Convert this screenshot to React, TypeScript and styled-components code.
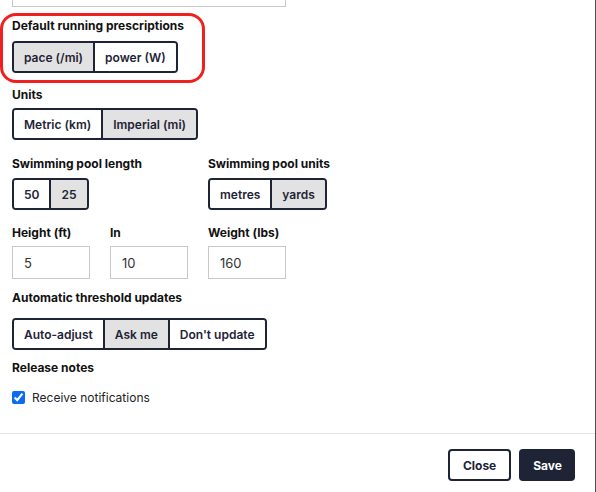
import React from "react";
import styled, { createGlobalStyle } from "styled-components";

const Global = createGlobalStyle`
  html, body { margin: 0; padding: 0; background: #fff; }
  body { font-family: Inter, "Noto Sans", sans-serif; color: #1e2336; }
  * { box-sizing: border-box; }
`;

const NAVY = "#1e2336";

const Modal = styled.div`
  width: 596px;
  height: 492px;
  display: flex;
  flex-direction: column;
  border-right: 1px solid #4a4a4a;
  overflow: hidden;
  background: #fff;
`;

const Body = styled.div`
  flex: 1;
  padding: 0 12px;
  display: flex;
  flex-direction: column;
`;

const TopInput = styled.div`
  margin-top: -27px;
  width: 274px;
  height: 34px;
  border: 1px solid #c9c9c9;
  flex: none;
`;

const Field = styled.div<{ $mt: number; $gap: number }>`
  position: relative;
  display: flex;
  flex-direction: column;
  align-items: flex-start;
  margin-top: ${(p) => p.$mt}px;
  gap: ${(p) => p.$gap}px;
`;

const Label = styled.div`
  font-size: 12px;
  line-height: 15px;
  font-weight: 700;
  color: #111;
`;

const Highlight = styled.div`
  position: absolute;
  left: -12px;
  top: -5px;
  width: 205px;
  height: 70px;
  border: 3px solid #f21f1f;
  border-radius: 16px;
  pointer-events: none;
`;

const Group = styled.div`
  display: inline-flex;
  height: 32px;
  border: 2px solid ${NAVY};
  border-radius: 4px;
  overflow: hidden;
`;

const Segment = styled.button<{ $active?: boolean }>`
  font-family: Inter, "Noto Sans", sans-serif;
  font-size: 12px;
  font-weight: 600;
  color: ${NAVY};
  background: ${(p) => (p.$active ? "#e2e2e2" : "#fff")};
  border: none;
  padding: 0 10px;
  margin: 0;
  height: 100%;
  cursor: pointer;
  & + & { border-left: 2px solid ${NAVY}; }
`;

const Row = styled.div<{ $mt: number }>`
  display: grid;
  grid-template-columns: 78px 78px 78px;
  column-gap: 20px;
  margin-top: ${(p) => p.$mt}px;
`;

const Cell = styled.div<{ $col: number; $gap: number }>`
  grid-column: ${(p) => p.$col};
  display: flex;
  flex-direction: column;
  align-items: flex-start;
  gap: ${(p) => p.$gap}px;
  white-space: nowrap;
`;

const TextInput = styled.input`
  width: 78px;
  height: 33px;
  border: 1px solid #c9c9c9;
  border-radius: 0;
  padding: 0 11px;
  font-family: Inter, "Noto Sans", sans-serif;
  font-size: 13px;
  color: #333;
  outline: none;
`;

const CheckRow = styled.label`
  display: flex;
  align-items: center;
  gap: 7px;
  font-size: 12px;
  color: #222;
  margin-top: 2px;
`;

const Check = styled.input`
  width: 13px;
  height: 13px;
  margin: 0;
  accent-color: #0b6bf2;
`;

const Footer = styled.div`
  flex: none;
  height: 59px;
  border-top: 1px solid #e3e3e3;
  display: flex;
  justify-content: flex-end;
  align-items: flex-start;
  gap: 8px;
  padding: 15px 20px 0 0;
`;

const ActionButton = styled.button<{ $primary?: boolean }>`
  height: 32px;
  padding: ${(p) => (p.$primary ? "0 11px 0 12px" : "0 13px")};
  border-radius: 4px;
  border: 2px solid ${NAVY};
  background: ${(p) => (p.$primary ? NAVY : "#fff")};
  color: ${(p) => (p.$primary ? "#fff" : NAVY)};
  font-family: Inter, "Noto Sans", sans-serif;
  font-size: 12px;
  font-weight: 700;
  cursor: pointer;
`;

type SegProps = { options: string[]; active: number };
const Segmented = ({ options, active }: SegProps) => (
  <Group>
    {options.map((o, i) => (
      <Segment key={o} $active={i === active}>
        {o}
      </Segment>
    ))}
  </Group>
);

export default function App() {
  return (
    <>
      <Global />
      <Modal>
        <Body>
          <TopInput />
          <Field $mt={11} $gap={8}>
            <Highlight />
            <Label>Default running prescriptions</Label>
            <Segmented options={["pace (/mi)", "power (W)"]} active={0} />
          </Field>
          <Field $mt={14} $gap={6}>
            <Label>Units</Label>
            <Segmented options={["Metric (km)", "Imperial (mi)"]} active={1} />
          </Field>
          <Row $mt={16}>
            <Cell $col={1} $gap={7}>
              <Label>Swimming pool length</Label>
              <Segmented options={["50", "25"]} active={1} />
            </Cell>
            <Cell $col={3} $gap={7}>
              <Label>Swimming pool units</Label>
              <Segmented options={["metres", "yards"]} active={1} />
            </Cell>
          </Row>
          <Row $mt={15}>
            <Cell $col={1} $gap={6}>
              <Label>Height (ft)</Label>
              <TextInput defaultValue="5" />
            </Cell>
            <Cell $col={2} $gap={6}>
              <Label>In</Label>
              <TextInput defaultValue="10" />
            </Cell>
            <Cell $col={3} $gap={6}>
              <Label>Weight (lbs)</Label>
              <TextInput defaultValue="160" />
            </Cell>
          </Row>
          <Field $mt={11} $gap={13}>
            <Label>Automatic threshold updates</Label>
            <Segmented options={["Auto-adjust", "Ask me", "Don't update"]} active={1} />
          </Field>
          <Field $mt={10} $gap={13}>
            <Label>Release notes</Label>
            <CheckRow>
              <Check type="checkbox" defaultChecked />
              Receive notifications
            </CheckRow>
          </Field>
        </Body>
        <Footer>
          <ActionButton>Close</ActionButton>
          <ActionButton $primary>Save</ActionButton>
        </Footer>
      </Modal>
    </>
  );
}
